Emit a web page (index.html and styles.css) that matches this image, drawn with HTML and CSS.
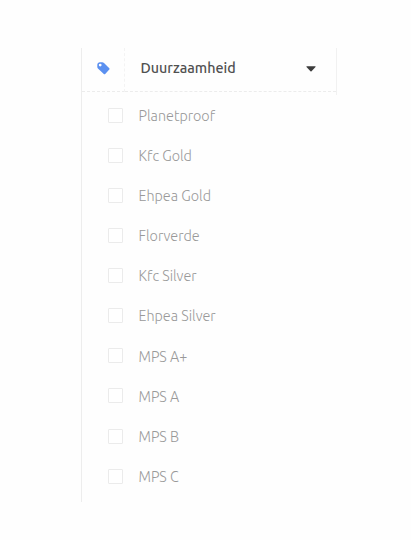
FILE: index.html
```html
<!DOCTYPE html>
<html lang="nl">
<head>
  <meta charset="UTF-8" />
  <meta name="viewport" content="width=device-width, initial-scale=1.0"/>
  <title>Duurzaamheid</title>
  <link rel="stylesheet" href="styles.css">
</head>
<body>
  <div class="filter">
    <div class="filter-header">
      <div class="filter-icon">
        <svg width="13" height="13" viewBox="0 0 13 13">
          <path fill="#5b90f0" fill-rule="evenodd" d="M0.3 2.6Q0.4 0.4 2.6 0.3H5.2Q6.2 0.3 7 1L12.3 6.2Q13 6.9 12.3 7.6L8.2 12Q7.5 12.7 6.8 12L1.2 6.8Q0.3 6 0.3 5ZM3.2 1.7A1.4 1.4 0 1 0 3.2 4.5A1.4 1.4 0 1 0 3.2 1.7Z"/>
        </svg>
      </div>
      <div class="filter-title">
        <span>Duurzaamheid</span>
        <svg class="caret" width="10" height="6" viewBox="0 0 10 6">
          <path fill="#3c3c3c" d="M0.8 0.3H9.2Q9.9 0.5 9.5 1.1L5.5 5.3Q5 5.8 4.5 5.3L0.5 1.1Q0.1 0.5 0.8 0.3Z"/>
        </svg>
      </div>
    </div>
    <div class="filter-list">
      <label class="option"><input type="checkbox" /><span>Planetproof</span></label>
      <label class="option"><input type="checkbox" /><span>Kfc Gold</span></label>
      <label class="option"><input type="checkbox" /><span>Ehpea Gold</span></label>
      <label class="option"><input type="checkbox" /><span>Florverde</span></label>
      <label class="option"><input type="checkbox" /><span>Kfc Silver</span></label>
      <label class="option"><input type="checkbox" /><span>Ehpea Silver</span></label>
      <label class="option"><input type="checkbox" /><span>MPS A+</span></label>
      <label class="option"><input type="checkbox" /><span>MPS A</span></label>
      <label class="option"><input type="checkbox" /><span>MPS B</span></label>
      <label class="option"><input type="checkbox" /><span>MPS C</span></label>
    </div>
  </div>
</body>
</html>
```
FILE: styles.css
```css
* { margin: 0; padding: 0; box-sizing: border-box; }
body { background: #fefefe; color: #999; font-family: Ubuntu, "Noto Sans", sans-serif; font-size: 14.35px; }
.filter { width: 256px; height: 454px; margin: 48px 0 0 81px; border-left: 1px solid #ededed; }
.filter-header { display: flex; height: 47px; border-right: 1px solid #f1f1f1; }
.filter-icon { display: flex; align-items: center; justify-content: center; width: 43px; height: 44px; padding-bottom: 3px; border-right: 1px dashed #f3f3f3; border-bottom: 1px dashed #ececec; }
.filter-title { display: flex; flex: 1; align-items: center; justify-content: space-between; height: 44px; padding: 0 20.5px 3px 15.5px; border-bottom: 1px dashed #ececec; color: #505050; font-weight: 500; }
.caret { margin-top: 1px; }
.option { display: flex; align-items: center; height: 40.13px; padding-left: 26px; }
.option input { appearance: none; width: 15px; height: 15px; border: 1px solid #ebebeb; border-radius: 1px; background: #fff; }
.option span { margin-left: 15.5px; padding-top: 1.4px; font-weight: 300; white-space: nowrap; }
```
